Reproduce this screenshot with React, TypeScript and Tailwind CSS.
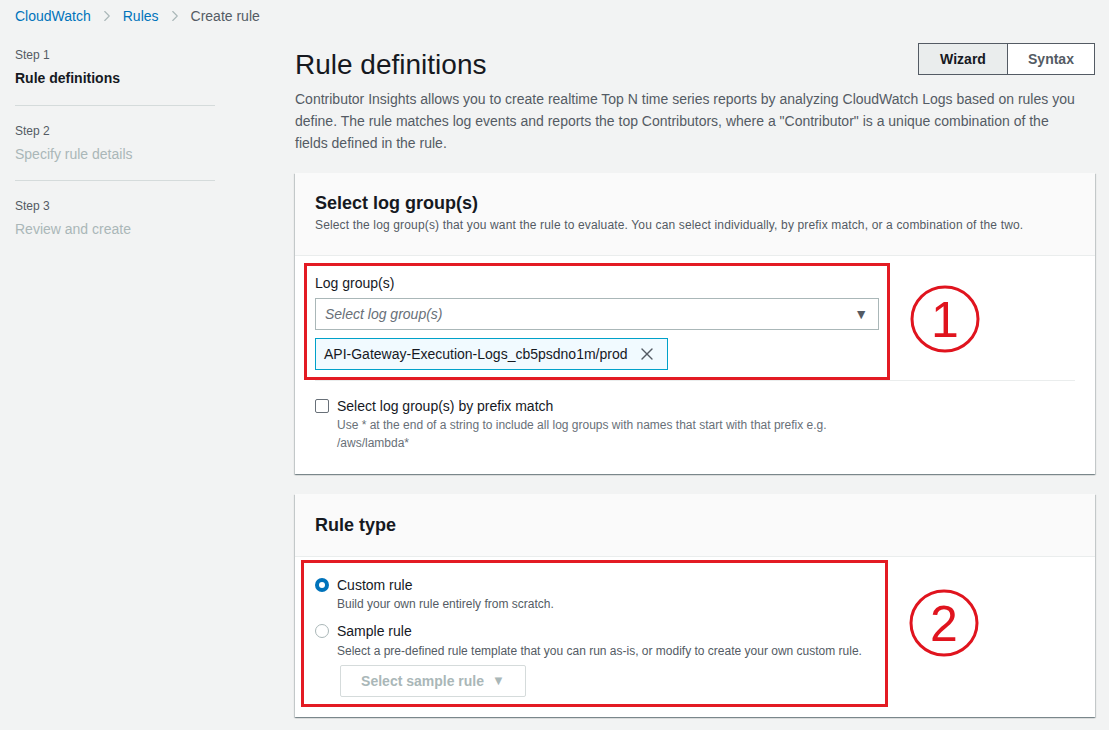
import { ChevronRight, X } from 'lucide-react';

const font = { fontFamily: '"Liberation Sans", Arial, sans-serif' };

function Annotation({ n }: { n: string }) {
  return (
    <svg width="74" height="72" viewBox="0 0 74 72" className="absolute">
      <ellipse cx="37" cy="36" rx="33" ry="32" fill="none" stroke="#e0141e" strokeWidth="3" />
      <text x="37" y="54" textAnchor="middle" fontSize="50" fill="#e0141e" fontFamily="Liberation Sans, sans-serif">{n}</text>
    </svg>
  );
}

function StepItem({ step, label, active }: { step: string; label: string; active?: boolean }) {
  return (
    <div className="pt-[17px] pb-[17px]">
      <div className="text-[12px] leading-[16px] text-[#545b64]">{step}</div>
      <div className={`mt-[6px] text-[14px] leading-[18px] ${active ? 'font-bold text-[#16191f]' : 'text-[#aab7b8]'}`}>{label}</div>
    </div>
  );
}

export default function App() {
  return (
    <div style={font} className="min-h-[730px] bg-[#f2f3f3] text-[#16191f]">
      {/* breadcrumbs */}
      <div className="flex items-center h-[32px] pl-[15px] text-[14px]">
        <span className="text-[#0073bb]">CloudWatch</span>
        <ChevronRight size={18} strokeWidth={1.5} className="mx-[7px] text-[#aab7b8]" />
        <span className="text-[#0073bb]">Rules</span>
        <ChevronRight size={18} strokeWidth={1.5} className="mx-[7px] text-[#aab7b8]" />
        <span className="text-[#545b64]">Create rule</span>
      </div>

      <div className="flex pl-[15px] pr-[14px]">
        {/* steps */}
        <nav className="w-[200px] shrink-0 -mt-[2px]">
          <StepItem step="Step 1" label="Rule definitions" active />
          <div className="mt-[1px] h-px bg-[#d5dbdb]" />
          <StepItem step="Step 2" label="Specify rule details" />
          <div className="h-px bg-[#d5dbdb]" />
          <StepItem step="Step 3" label="Review and create" />
        </nav>

        <main className="ml-[80px] w-[800px]">
          <div className="flex items-start justify-between">
            <h1 className="mt-[15px] text-[28px] leading-[36px] font-normal">Rule definitions</h1>
            <div className="mt-[11px] flex text-[14px] font-bold">
              <button className="h-[32px] w-[90px] border border-[#545b64] bg-[#eaeded] text-[#16191f]">Wizard</button>
              <button className="h-[32px] w-[87px] border border-l-0 border-[#545b64] bg-white text-[#545b64]">Syntax</button>
            </div>
          </div>
          <p className="mt-[5px] w-[782px] text-[14px] leading-[22px] text-[#545b64]">
            Contributor Insights allows you to create realtime Top N time series reports by analyzing CloudWatch Logs based on rules you define. The rule matches log events and reports the top Contributors, where a "Contributor" is a unique combination of the fields defined in the rule.
          </p>

          {/* log groups panel */}
          <section className="mt-[19px] bg-white shadow-[0_1px_1px_0_rgba(0,28,36,0.3),1px_1px_1px_0_rgba(0,28,36,0.15),-1px_1px_1px_0_rgba(0,28,36,0.15)]">
            <header className="bg-[#fafafa] border-b border-[#eaeded] px-[20px] pt-[19px] pb-[21px]">
              <h2 className="text-[18px] leading-[22px] font-bold">Select log group(s)</h2>
              <p className="mt-[2px] text-[12px] leading-[18px] tracking-[0.15px] text-[#545b64]">
                Select the log group(s) that you want the rule to evaluate. You can select individually, by prefix match, or a combination of the two.
              </p>
            </header>
            <div className="px-[20px] pt-[17px] pb-[22px]">
              <div className="relative w-[564px] pb-[10px]">
                <div className="absolute -left-[11px] -right-[11px] -top-[10px] bottom-0 border-[3px] border-[#e31b23]" />
                <div className="absolute left-[593px] top-[10px]"><Annotation n="1" /></div>
                <label className="block text-[14px] leading-[20px]">Log group(s)</label>
                <div className="mt-[5px] flex h-[32px] items-center justify-between border border-[#aab7b8] bg-white pl-[9px] pr-[10px]">
                  <span className="text-[14px] italic text-[#687078]">Select log group(s)</span>
                  <span className="text-[14px] text-[#545b64]">▼</span>
                </div>
                <div className="mt-[8px] inline-flex h-[32px] items-center gap-[9px] border border-[#00a1c9] bg-[#f1faff] pl-[8px] pr-[10px]">
                  <span className="text-[14px]">API-Gateway-Execution-Logs_cb5psdno1m/prod</span>
                  <X size={20} strokeWidth={1.6} className="text-[#545b64]" />
                </div>
              </div>
              <div className="h-px bg-[#eaeded]" />
              <div className="mt-[16px] flex w-[564px]">
                <span className="mt-[2px] h-[14px] w-[14px] shrink-0 rounded-[2px] border border-[#687078] bg-white" />
                <div className="ml-[8px]">
                  <div className="text-[14px] leading-[18px]">Select log group(s) by prefix match</div>
                  <p className="mt-[1px] text-[12px] leading-[18px] text-[#687078]">
                    Use * at the end of a string to include all log groups with names that start with that prefix e.g. /aws/lambda*
                  </p>
                </div>
              </div>
            </div>
          </section>

          {/* rule type panel */}
          <section className="mt-[20px] bg-white shadow-[0_1px_1px_0_rgba(0,28,36,0.3),1px_1px_1px_0_rgba(0,28,36,0.15),-1px_1px_1px_0_rgba(0,28,36,0.15)]">
            <header className="bg-[#fafafa] border-b border-[#eaeded] px-[20px] pt-[20px] pb-[20px]">
              <h2 className="text-[18px] leading-[22px] font-bold">Rule type</h2>
            </header>
            <div className="px-[20px] pt-[3px] pb-[10px]">
              <div className="relative w-[564px] pt-[16px] pb-[10px]">
                <div className="absolute -left-[14px] -right-[9px] top-0 bottom-0 border-[3px] border-[#e31b23]" />
                <div className="absolute left-[592px] top-[27px]"><Annotation n="2" /></div>
                <div className="flex">
                  <span className="mt-[2px] flex h-[14px] w-[14px] shrink-0 items-center justify-center rounded-full bg-[#0073bb]">
                    <span className="h-[6px] w-[6px] rounded-full bg-white" />
                  </span>
                  <div className="ml-[8px]">
                    <div className="text-[14px] leading-[18px]">Custom rule</div>
                    <div className="mt-[1px] text-[12px] leading-[18px] text-[#545b64]">Build your own rule entirely from scratch.</div>
                  </div>
                </div>
                <div className="mt-[9px] flex">
                  <span className="mt-[2px] h-[14px] w-[14px] shrink-0 rounded-full border border-[#aab7b8] bg-white" />
                  <div className="ml-[8px]">
                    <div className="text-[14px] leading-[18px]">Sample rule</div>
                    <div className="mt-[2px] text-[12px] leading-[18px] text-[#545b64]">Select a pre-defined rule template that you can run as-is, or modify to create your own custom rule.</div>
                    <button className="ml-[3px] mt-[5px] flex h-[32px] w-[186px] items-center justify-center gap-[8px] rounded-[2px] border border-[#d5dbdb] bg-white text-[14px] font-bold text-[#aab7b8]">
                      Select sample rule <span className="text-[13px]">▼</span>
                    </button>
                  </div>
                </div>
              </div>
            </div>
          </section>
        </main>
      </div>
    </div>
  );
}
